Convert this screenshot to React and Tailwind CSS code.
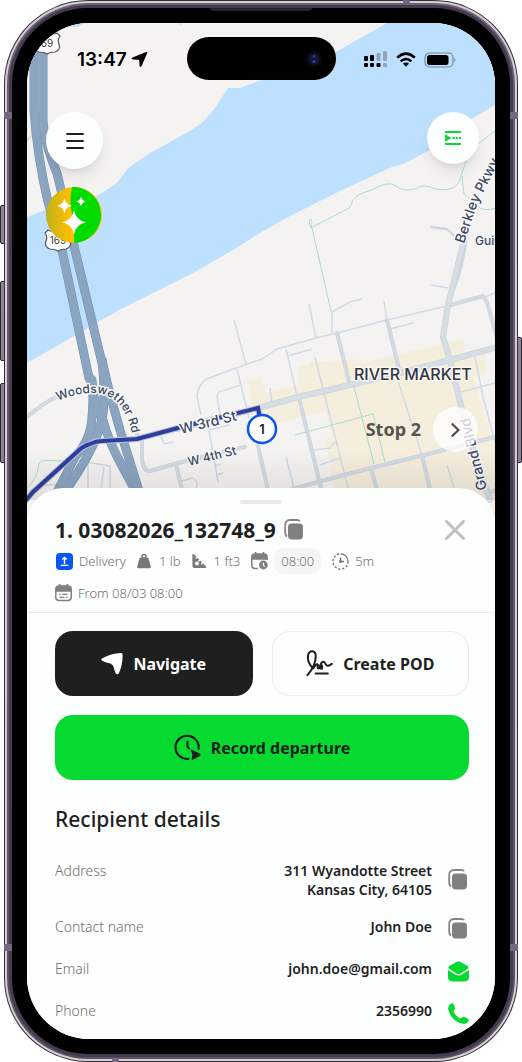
import { useState } from 'react';

const water =
  'M387 23 L336 52 L262 80 L240 88 L228 88 L215 108 L203 122 L190 131 L150 153 L128 168 L117 183 L97 196 L45 210 L27 217 V363 L76 335 L98 322 L123 308 L193 273 L233 250 L260 233 L290 216 L340 191 L392 167 L403 164 L430 150 L473 118 L495 105 V23 Z';

const district =
  'M247 381 L260 378 L266 393 L299 385 V366 L310 365 V362 L361 359 V363 L463 339 L465 352 L485 348 L486 374 L474 378 L497 455 V518 H340 L325 440 L332 436 L325 411 L262 427 L252 402 Z';

const thinStreets = [
  'M201 415 L197 397 Q198 384 207 379 L233 369 L262 359 L277 349 L316 338 L337 333 L387 320 L447 306',
  'M234 320 L246 364',
  'M237 369 L249 418',
  'M241 385 L219 392 L217 396 L220 415',
  'M309 304 L316 338',
  'M332 333 V312 L350 302 L362 299',
  'M286 349 L297 396',
  'M288 356 L312 349',
  'M315 357 L348 488',
  'M270 388 L272 404',
  'M314 450 L330 448 L334 443 H338',
  'M320 465 L340 458',
  'M286 457 L294 488',
  'M384 301 L387 320',
  'M390 329 L413 323',
  'M397 378 L422 455 L440 520',
  'M431 285 L448 288',
  'M461 392 L495 383',
  'M475 357 L483 397 L497 450',
  'M447 465 L458 500',
  'M485 297 L497 292',
  'M209 430 L229 425 M209 430 L218 482 M214 466 L221 464 M217 475 L223 473',
  'M161 436 L164 444 L173 442',
  'M181 481 L193 478 Q199 482 196 488',
  'M73 460 L110 466 V490 M88 464 V488 M104 467 L101 490',
  'M40 486 L60 484 L77 476',
  'M27 141 L34 133',
  'M181 20 V25',
];

const wideStreets = [
  'M178 430 L258 409',
  'M142 442 V460 Q144 472 150 471 L178 463 L245 447',
  'M27 417 Q42 404 56 397',
  'M136 420 L137 439',
  'M337 333 L350 385',
  'M387 320 L400 373',
  'M299 398 L322 492',
  'M258 446 L268 490',
  'M176 464 L182 490',
  'M292 489 L325 480 L371 468 L420 456 L495 437',
  'M371 468 L377 490',
  'M422 455 L430 490',
  'M447 306 L483 296 L487 302 L497 338',
  'M487 493 L497 490',
];

const mainStreets = [
  'M262 407 L298 397 L350 385 L400 373 L450 360 L497 347',
  'M464 240 L448 305 L443 337 L450 360 L462 410 L477 463 L490 500',
];

const highways = [
  'M92 380 Q94 400 92 417 Q91 440 75 457 L54 498',
  'M90 378 Q96 410 103 420 Q108 440 120 462 L136 492',
  'M102 360 Q106 400 102 420 Q95 446 78 472 L60 500',
  'M102 360 Q109 392 113 405 L120 430 L140 494',
  'M43 40 L43 120 Q44 142 57 173 L75 250 L102 363',
  'M34 40 L34 110 Q37 155 48 202 L62 250 L89 378',
];

const trails = [
  'M312 228 Q308 226 310 219 Q313 218 311 228 L349 208 Q353 204 352 201 Q358 193 372 190 Q388 180 396 186 Q403 192 415 189 Q424 183 435 189 Q458 193 461 176 L470 150 L495 131',
  'M462 176 L464 194 L478 206 Q482 212 497 208',
  'M312 228 L331 311',
  'M354 387 L374 464',
  'M295 435 L373 414 L385 462',
  'M27 488 Q38 478 39 463 Q42 459 58 461 L77 462',
];

const route =
  'M22 505 L33 492 L77 452 Q83 446 90 444 Q96 441 102 441 L137 439 L178 428 L258 408 L262 429';

function Roads({ paths, color, casing, width }) {
  return (
    <g fill="none" strokeLinecap="round" strokeLinejoin="round">
      {paths.map((d) => (
        <path key={'c' + d} d={d} stroke={casing} strokeWidth={width + 1} />
      ))}
      {paths.map((d) => (
        <path key={d} d={d} stroke={color} strokeWidth={width} />
      ))}
    </g>
  );
}

function Shield({ x, y, label }) {
  return (
    <g transform={`translate(${x} ${y})`}>
      <path
        d="M-10 -10 Q-7 -8 -4 -10 L0 -12 L4 -10 Q7 -8 10 -10 L13 -7 Q10 -3 12 1 Q14 7 8 9 Q3 9 0 11 Q-3 9 -8 9 Q-14 7 -12 1 Q-10 -3 -13 -7 Z"
        fill="#fff"
        stroke="#555"
        strokeWidth="1.2"
      />
      <text y="4" textAnchor="middle" fontSize="10" fill="#3c3c3c">{label}</text>
    </g>
  );
}

function StreetMap() {
  return (
    <svg
      className="absolute inset-0 h-full w-full font-['Inter',sans-serif]"
      viewBox="27 23 468 495"
      preserveAspectRatio="xMidYMid slice"
      aria-label="Map"
    >
      <defs>
        <path id="woodswether" d="M58 401 C70 395 84 393 93 393 C110 393 120 403 125 413 Q129 420 132 434" />
        <path id="third" d="M181 434 L250 417" />
        <path id="fourth" d="M189 466 L250 451" />
        <path id="berkley" d="M464 244 L477 205 L505 150" />
        <path id="grand" d="M487 489 L464 395" />
        <linearGradient id="shade" x1="0" y1="0" x2="0" y2="1">
          <stop offset="0" stopColor="#000" stopOpacity="0" />
          <stop offset="1" stopColor="#302020" stopOpacity="0.1" />
        </linearGradient>
      </defs>
      <rect x="0" y="0" width="522" height="540" fill="#f5f3f2" />
      <path d={water} fill="#bee0ff" />
      <path d="M50 23 H84 L78 27 H50 Z" fill="#bee0ff" />
      <path d={district} fill="#f6eedd" />

      <g fill="none" stroke="#a9dcc8" strokeWidth="1">
        {trails.map((d) => (
          <path key={d} d={d} />
        ))}
      </g>
      <g fill="none" stroke="#d0dae4" strokeWidth="1.5">
        {thinStreets.map((d) => (
          <path key={d} d={d} />
        ))}
      </g>
      <path d="M431 227 L446 229 Q452 232 457 240" fill="none" stroke="#cfd6e2" strokeWidth="2.5" strokeLinecap="round" />
      <Roads paths={wideStreets} color="#d2dbe3" casing="#c8d2dc" width={3} />
      <path d="M466 240 Q462 270 453 291" fill="none" stroke="#cdd7e0" strokeWidth="3" />
      <Roads paths={mainStreets} color="#d5dee5" casing="#c5d0da" width={5} />
      <Roads paths={highways} color="#8ba4c0" casing="#7292b5" width={8} />

      <path d={route} fill="none" stroke="#b9c4dc" strokeWidth="6" />
      <path d={route} fill="none" stroke="#2f3d9e" strokeWidth="4" />

      <g fill="#3b4a66" stroke="#f8f7f6" strokeWidth="3" paintOrder="stroke" strokeLinejoin="round" fontWeight="500">
        <text fontSize="12"><textPath href="#woodswether">Woodswether Rd</textPath></text>
        <text fontSize="14"><textPath href="#third">W 3rd St</textPath></text>
        <text fontSize="12"><textPath href="#fourth">W 4th St</textPath></text>
        <text fontSize="14"><textPath href="#berkley">Berkley Pkwy</textPath></text>
        <text fontSize="14"><textPath href="#grand">Grand Blvd</textPath></text>
        <text x="475" y="245" fontSize="12">Guin</text>
        <text x="354" y="380" fontSize="16" fill="#33363d">RIVER MARKET</text>
      </g>

      <Shield x={47} y={43} label="69" />
      <Shield x={58} y={240} label="169" />

      <circle cx="262" cy="429" r="14" fill="#fff" stroke="#0a55f0" strokeWidth="2.5" />
      <text x="262" y="434" textAnchor="middle" fontSize="13" fontWeight="600" fill="#222">1</text>
      <rect x="0" y="450" width="522" height="50" fill="url(#shade)" />
    </svg>
  );
}

function StatusBar() {
  return (
    <div className="grid grid-cols-[1fr_149px_1fr] items-center pt-[14px]">
      <div className="flex items-center gap-1 pt-0.5 pl-[50px] font-['Inter',sans-serif] text-[19px] leading-6 font-semibold text-black">
        <span>13:47</span>
        <svg width="17" height="17" viewBox="0 0 17 17" fill="currentColor">
          <path d="M15.2 .9 Q16.6 .6 16.2 2 L10.6 15 Q9.4 17.2 8.6 15 L8.2 9.4 Q8.1 8.7 7.4 8.7 L1.8 8.4 Q-.4 7.8 1.5 6.6 Z" />
        </svg>
      </div>
      <div className="flex h-[43px] items-center justify-end rounded-full bg-black pr-[14px]">
        <svg width="16" height="16" viewBox="0 0 16 16">
          <circle cx="8" cy="8" r="8" fill="#0c0710" />
          <circle cx="8" cy="8" r="5.5" fill="#15153c" />
          <circle cx="8" cy="5.5" r="1.4" fill="#2c3a86" />
          <circle cx="8" cy="10.5" r="1.5" fill="#2b46a4" />
        </svg>
      </div>
      <div className="flex items-center gap-2 pt-0.5 pl-7 text-black">
        <svg width="24" height="17" viewBox="0 0 24 17" fill="currentColor">
          <rect x="0" y="5" width="4" height="5" rx="1" />
          <rect x="6" y="4" width="4" height="6" rx="1" />
          <rect x="0" y="12" width="4" height="4" rx="1" />
          <rect x="6" y="12" width="4" height="4" rx="1" />
          <rect x="12.5" y="12" width="4" height="4" rx="1" />
          <g opacity="0.25">
            <rect x="12.5" y="2" width="4" height="8" rx="1" />
            <rect x="19" y="0" width="4" height="10" rx="1" />
            <rect x="19" y="12" width="4" height="4" rx="1" />
          </g>
        </svg>
        <svg width="20" height="16" viewBox="0 0 20 16" fill="none" stroke="currentColor" strokeWidth="2.6">
          <path d="M1.2 5.6 Q10 -2.4 18.8 5.6" />
          <path d="M4.6 9.4 Q10 4.6 15.4 9.4" />
          <path d="M10 14.8 L7 11.6 Q10 9.4 13 11.6 Z" fill="currentColor" stroke="none" />
        </svg>
        <svg width="33" height="16" viewBox="0 0 33 16">
          <rect x="1" y="1" width="28" height="14" rx="4.5" fill="none" stroke="#000" strokeOpacity="0.4" strokeWidth="1.2" />
          <rect x="3" y="3" width="21.5" height="10" rx="2.8" fill="#000" />
          <path d="M30.6 5.6 Q32.4 8 30.6 10.4 Z" fill="#000" opacity="0.5" />
        </svg>
      </div>
    </div>
  );
}

function CopyIcon() {
  return (
    <svg width="20" height="22" viewBox="0 0 20 22">
      <path d="M16 2.2 Q15.4 1 13 1 H6 Q1.2 1 1.2 6 V13 Q1.2 16.6 3 17.4" fill="none" stroke="#858585" strokeWidth="1.8" />
      <rect x="4" y="4.4" width="15" height="16" rx="3.6" fill="#808080" />
    </svg>
  );
}

function CalendarIcon({ children }) {
  return (
    <svg width="17" height="18" viewBox="0 0 17 18" fill="none" stroke="#808080" strokeWidth="1.5">
      <path d="M4.6 0 V3 M12.4 0 V3" strokeWidth="1.8" />
      <path d="M.8 7 V5 Q.8 2 4 2 H13 Q16.2 2 16.2 5 V7 Z" fill="#808080" />
      {children}
    </svg>
  );
}

function MetaItem({ icon, children }) {
  return (
    <span className="flex items-center gap-1.5">
      {icon}
      {children}
    </span>
  );
}

function DetailRow({ label, action, children }) {
  return (
    <div className="flex items-start gap-4">
      <dt className="flex-1 font-light text-[#6e6e6e]">{label}</dt>
      <dd className="flex items-start gap-[15px] text-right font-semibold text-[#1f1f1f]">
        <span>{children}</span>
        <span className="flex h-6 w-[22px] items-center justify-center self-center">{action}</span>
      </dd>
    </div>
  );
}

function StopSheet({ onClose }) {
  return (
    <main className="relative -mt-[30px] rounded-t-[36px] bg-[#fdfefe] font-['Noto_Sans',sans-serif] text-[#1f1f1f]">
      <div className="flex justify-center pt-3">
        <div className="h-1 w-[42px] rounded-full bg-[#e9ebea]" />
      </div>

      <header className="border-b border-[#e6eae8] pr-[26px] pb-1.5 pl-7">
        <div className="flex items-center gap-2 pt-2">
          <h1 className="text-[21px] leading-9 font-bold">1. 03082026_132748_9</h1>
          <button type="button" aria-label="Copy order number"><CopyIcon /></button>
          <button type="button" aria-label="Close" className="ml-auto p-1" onClick={onClose}>
            <svg width="20" height="20" viewBox="0 0 20 20" stroke="#bfc1c0" strokeWidth="3" strokeLinecap="round">
              <path d="M1.5 1.5 L18.5 18.5 M18.5 1.5 L1.5 18.5" />
            </svg>
          </button>
        </div>

        <div className="flex items-center gap-[11px] text-[13px] leading-[26px] font-light text-[#6e6e6e]">
          <MetaItem
            icon={
              <svg width="18" height="17" viewBox="-1 0 18 17">
                <rect width="17" height="17" rx="4" fill="#0a55f5" />
                <path d="M8.5 11 V5 M6.3 6.6 L8.5 4.4 L10.7 6.6 M4.8 12.4 H12.2" fill="none" stroke="#fff" strokeWidth="1.4" />
              </svg>
            }
          >
            Delivery
          </MetaItem>
          <MetaItem
            icon={
              <svg width="16" height="16" viewBox="0 0 16 16">
                <path d="M3.6 4.8 H10.4 Q11.4 4.8 11.7 5.8 L13.8 13.8 Q14 15.2 12.8 15.2 H1.2 Q0 15.2 .2 13.8 L2.3 5.8 Q2.6 4.8 3.6 4.8 Z" fill="#777" />
                <circle cx="7" cy="3.4" r="1.9" fill="none" stroke="#777" strokeWidth="1.6" />
              </svg>
            }
          >
            1 lb
          </MetaItem>
          <MetaItem
            icon={
              <svg width="16" height="16" viewBox="0 0 16 16">
                <path d="M.8 1 Q1.6 1 2.4 1.8 L13.6 13 Q15.4 15 13 15 H2.4 Q.4 15 .4 13 V1.6 Z" fill="#777" />
                <circle cx="5" cy="10.6" r="2" fill="#fdfefe" />
                <path d="M3.6 5.6 L5.8 3.4 M6.4 8.4 L8.6 6.2 M9.2 11.2 L11.4 9" stroke="#fdfefe" strokeWidth="1.3" />
              </svg>
            }
          >
            1 ft3
          </MetaItem>
          <MetaItem
            icon={
              <CalendarIcon>
                <path d="M.8 7 V13.5 Q.8 16.4 4 16.4 H7 M16.2 6 V8" />
                <circle cx="12.4" cy="13" r="4.4" fill="#808080" stroke="none" />
                <path d="M12.4 10.8 V13.2 L13.8 14.2" stroke="#fff" strokeWidth="1.2" />
              </CalendarIcon>
            }
          >
            <span className="rounded-[10px] bg-[#f4f6f5] px-[7px]">08:00</span>
          </MetaItem>
          <MetaItem
            icon={
              <svg width="17" height="17" viewBox="0 0 17 17" fill="none" stroke="#777">
                <path d="M8.5 .9 A7.6 7.6 0 0 1 16.1 8.5" strokeWidth="1.4" />
                <path d="M16.1 8.5 A7.6 7.6 0 1 1 8.5 .9" strokeWidth="1.4" strokeDasharray="2.2 1.8" />
                <path d="M8.5 4.4 V8.5 H12" strokeWidth="1.5" />
                <circle cx="8.5" cy="8.5" r="1.5" fill="#777" stroke="none" />
              </svg>
            }
          >
            5m
          </MetaItem>
        </div>

        <div className="mt-1.5 flex text-[13px] leading-[26px] font-light text-[#6e6e6e]">
          <MetaItem
            icon={
              <CalendarIcon>
                <path d="M.8 7 V13.5 Q.8 16.4 4 16.4 H13 Q16.2 16.4 16.2 13.5 V7" />
                <path d="M4 10.3 H5.6 M7 10.3 H12.6 M4.4 13.3 H9.6 M11 13.3 H12.6" strokeWidth="1.3" />
              </CalendarIcon>
            }
          >
            From 08/03 08:00
          </MetaItem>
        </div>
      </header>

      <div className="pt-[18px] pr-[26px] pb-[14px] pl-7">
        <div className="grid grid-cols-2 gap-[19px] text-[16px] font-bold">
          <button type="button" className="flex h-[65px] items-center justify-center gap-2.5 rounded-[18px] bg-[#1f1f1f] text-white">
            <svg width="22" height="23" viewBox="0 0 22 23" fill="currentColor">
              <path d="M1 6.6 Q10 1.4 20 1 Q21.6 1 21.6 2.6 Q21.8 12.6 18 21 Q16.4 23.6 14.6 21.2 Q13.4 18.8 12.8 15.6 Q12 12.8 9.4 11.6 Q5 10.6 1.6 9 Q-.6 7.8 1 6.6 Z" />
            </svg>
            Navigate
          </button>
          <button type="button" className="flex h-[65px] items-center justify-center gap-2.5 rounded-[18px] border border-[#e9edeb]">
            <svg width="27" height="27" viewBox="0 0 27 27" fill="none" stroke="currentColor" strokeWidth="2" strokeLinecap="round" strokeLinejoin="round">
              <path d="M1.4 25.2 C6.6 19 10.4 11 9.6 4.6 C9 .4 4 -.2 2.4 4 C.8 9.4 3.4 15.4 7.2 18.4 C9 15.2 11 13.6 11.8 14.6 C12.4 15.6 10.8 18 12.2 18.6 C13.8 18.8 14 12.8 16.8 11.8 C19.4 11.4 19 14.6 21 15.6 C22.8 16.2 24 15 25.8 13.8" />
              <path d="M14.4 18.6 Q14.8 15.6 15.8 15.2 Q16.4 15.8 16 18.8 M9.6 23.6 H21.8" />
            </svg>
            Create POD
          </button>
          <button type="button" className="col-span-2 flex h-[65px] items-center justify-center gap-2.5 rounded-[18px] bg-[#06d92f]">
            <svg width="27" height="27" viewBox="0 0 27 27" fill="none" stroke="currentColor" strokeWidth="2.2" strokeLinecap="round">
              <path d="M24.6 14.8 A11.6 11.6 0 1 0 14.4 24.9" />
              <path d="M13.4 7.6 V12 Q13.4 13.4 15 14.4" />
              <path d="M17.6 16.2 L26 20.2 Q26.8 20.8 26 21.4 L18 25.6 L18.8 21 Z" fill="currentColor" strokeWidth="1" strokeLinejoin="round" />
            </svg>
            Record departure
          </button>
        </div>

        <h2 className="pt-[23px] text-[21px] leading-8 font-medium">Recipient details</h2>

        <dl className="mt-[26px] flex flex-col gap-[18px] text-[14px] leading-[19px]">
          <DetailRow label="Address" action={<button type="button" aria-label="Copy address"><CopyIcon /></button>}>
            311 Wyandotte Street
            <br />
            Kansas City, 64105
          </DetailRow>
          <DetailRow label="Contact name" action={<button type="button" aria-label="Copy contact name"><CopyIcon /></button>}>
            John Doe
          </DetailRow>
          <DetailRow
            label="Email"
            action={
              <a href="mailto:john.doe@gmail.com" aria-label="Send email">
                <svg width="21" height="21" viewBox="0 0 21 21" fill="#06d92f">
                  <path d="M.4 7.2 Q.4 5.4 2 4.6 L9 .8 Q10.5 .1 12 .8 L19 4.6 Q20.6 5.4 20.6 7.2 L12.6 12.4 Q10.5 13.6 8.4 12.4 Z" />
                  <path d="M0 9 L7.6 13.8 Q10.5 15.4 13.4 13.8 L21 9 V16 Q21 20.4 16.6 20.4 H4.4 Q0 20.4 0 16 Z" />
                </svg>
              </a>
            }
          >
            john.doe@gmail.com
          </DetailRow>
          <DetailRow
            label="Phone"
            action={
              <a href="tel:2356990" aria-label="Call">
                <svg width="21" height="21" viewBox="0 0 21 21" fill="#06d92f">
                  <path d="M3 .4 Q5 -.4 6 2 Q7.4 5 6.8 6.2 L5.4 8.4 Q7.4 13 12 15.4 L14.4 14.2 Q16 13.4 19.4 15.4 Q21.4 16.4 20.6 18 Q18.6 21.4 15 20.8 Q3.6 18.4 .4 7 Q-.6 2.4 3 .4 Z" />
                </svg>
              </a>
            }
          >
            2356990
          </DetailRow>
        </dl>
      </div>
    </main>
  );
}

function MapView() {
  return (
    <section className="relative pb-[66px]">
      <StreetMap />
      <div className="relative">
        <StatusBar />
        <div className="flex items-start justify-between pt-8 pr-4 pl-[19px]">
          <div className="flex flex-col gap-[18px]">
            <button type="button" aria-label="Menu" className="flex size-[57px] items-center justify-center rounded-full bg-[#fdfefe] shadow-lg">
              <svg width="18" height="18" viewBox="0 0 18 18" stroke="#1f1f1f" strokeWidth="1.8" strokeLinecap="round">
                <path d="M1 2 H17 M1 9 H17 M1 16 H17" />
              </svg>
            </button>
            <button type="button" aria-label="Assistant" className="flex size-14 items-center justify-center rounded-full">
              <svg width="56" height="56" viewBox="0 0 56 56" fill="#fff">
                <defs>
                  <linearGradient id="amber" x1="0" y1="0" x2="1" y2="0">
                    <stop offset="0" stopColor="#bdb21e" />
                    <stop offset="0.42" stopColor="#ffbe00" />
                    <stop offset="0.5" stopColor="#ffbe00" />
                  </linearGradient>
                </defs>
                <circle cx="28" cy="28" r="28" fill="url(#amber)" />
                <path d="M26 0 A28 28 0 1 1 28 56 Q28 40 28 32 Q22 18 26 0 Z" fill="#00dc00" />
                <path d="M28 23 Q29.8 33.4 40 35.3 Q29.8 37.4 28 47.4 Q26.2 37.4 16 35.3 Q26.2 33.4 28 23 Z" />
                <path d="M18.4 11 Q19.6 17.6 25.8 18.8 Q19.6 20 18.4 26.4 Q17.2 20 11.4 18.8 Q17.2 17.6 18.4 11 Z" />
                <path d="M35 9.4 Q35.8 13.6 40 14.4 Q35.8 15.2 35 19.4 Q34.2 15.2 30 14.4 Q34.2 13.6 35 9.4 Z" />
              </svg>
            </button>
          </div>
          <button type="button" aria-label="Route list" className="flex size-[52px] items-center justify-center rounded-full bg-[#fdfefe] shadow-lg">
            <svg width="16" height="16" viewBox="0 0 16 16" stroke="#0bd935" strokeWidth="2">
              <path d="M0 2 H16 M0 14 H16" />
              <path d="M7.4 8 H16" strokeDasharray="2.2 1" />
              <path d="M.6 5 L5.6 8 L.6 11 Z" fill="#0bd935" strokeWidth="1" strokeLinejoin="round" />
            </svg>
          </button>
        </div>
        <div className="flex items-center justify-end gap-3 pt-[164px] pr-[17px]">
          <span className="font-['Noto_Sans',sans-serif] text-[18px] font-bold text-[#55534d]">Stop 2</span>
          <button type="button" aria-label="Next stop" className="flex size-[45px] items-center justify-center rounded-full bg-white/75">
            <svg width="9" height="14" viewBox="0 0 9 14" fill="none" stroke="#4a4a48" strokeWidth="2.2" strokeLinecap="round">
              <path d="M1.5 1.2 L7.5 7 L1.5 12.8" />
            </svg>
          </button>
        </div>
      </div>
    </section>
  );
}

export default function App() {
  const [open, setOpen] = useState(true);

  return (
    <div className="relative bg-white px-1">
      {/* side keys */}
      <div className="absolute top-[205px] left-0 h-[39px] w-3 rounded-l-xs border border-[#2c2833] bg-[#8e8396]" />
      <div className="absolute top-[281px] left-0 h-[80px] w-3 rounded-l-xs border border-[#2c2833] bg-[#8e8396]" />
      <div className="absolute top-[383px] left-0 h-[80px] w-3 rounded-l-xs border border-[#2c2833] bg-[#8e8396]" />
      <div className="absolute top-[337px] right-0 h-[126px] w-3 rounded-r-xs border border-[#2c2833] bg-[#8e8396]" />

      <div className="relative rounded-[84px] bg-[#35303c] p-px">
        <div className="rounded-[83px] bg-[#d9cfd0] p-[2px]">
          <div className="rounded-[81px] bg-linear-to-b from-[#6d5f76] to-[#5c5064] p-[2px]">
            <div className="rounded-[79px] bg-[#453b4e] p-[3px]">
              <div className="rounded-[76px] bg-black p-[15px]">
                <div className="overflow-hidden rounded-[62px] bg-[#fdfefe]">
                  <MapView />
                  {open && <StopSheet onClose={() => setOpen(false)} />}
                </div>
              </div>
            </div>
          </div>
        </div>

        {/* antenna bands and earpiece */}
        <div className="absolute top-[112px] left-0 h-[7px] w-2 bg-[#75677f]" />
        <div className="absolute top-[112px] right-0 h-[7px] w-2 bg-[#75677f]" />
        <div className="absolute bottom-[111px] left-0 h-[7px] w-2 bg-[#75677f]" />
        <div className="absolute right-0 bottom-[111px] h-[7px] w-2 bg-[#75677f]" />
        <div className="absolute top-0 right-[108px] h-1 w-[7px] bg-[#75677f]" />
        <div className="absolute bottom-0 left-[108px] h-1 w-[7px] bg-[#75677f]" />
        <div className="absolute inset-x-0 top-2 mx-auto h-[3px] w-[102px] rounded-b-full bg-[#26232a]" />
      </div>
    </div>
  );
}
